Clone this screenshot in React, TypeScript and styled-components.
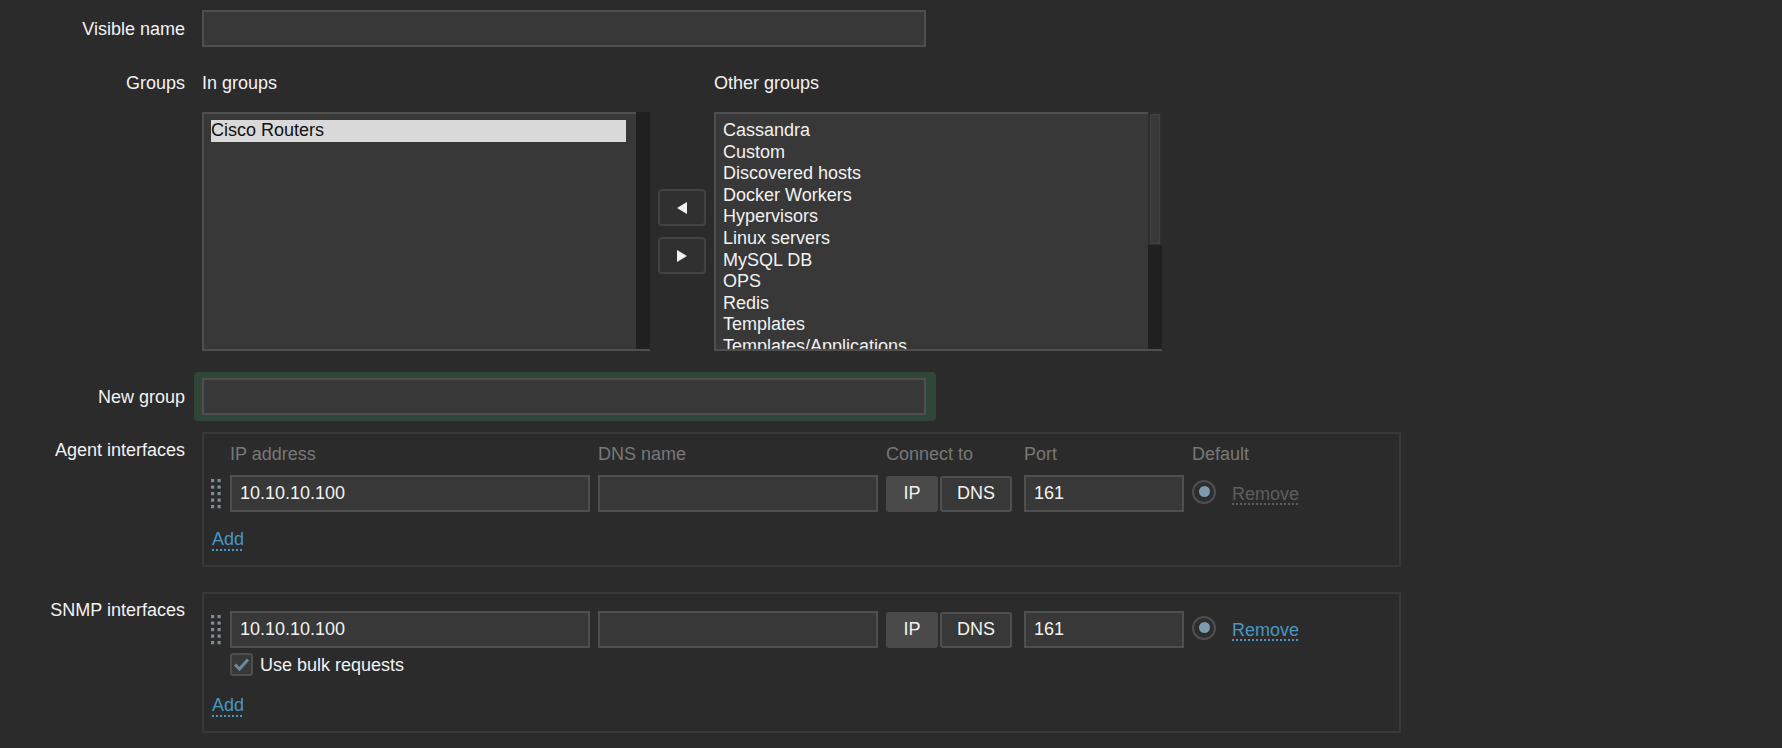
import React from 'react';
import styled, { createGlobalStyle } from 'styled-components';

const GlobalStyle = createGlobalStyle`
  body {
    margin: 0;
    background: #2b2b2b;
    color: #f2f2f2;
    font-family: 'Liberation Sans', Arial, sans-serif;
    font-size: 18px;
  }
`;

const inGroups = ['Cisco Routers'];
const otherGroups = [
  'Cassandra',
  'Custom',
  'Discovered hosts',
  'Docker Workers',
  'Hypervisors',
  'Linux servers',
  'MySQL DB',
  'OPS',
  'Redis',
  'Templates',
  'Templates/Applications',
];

const DragHandle = () => (
  <svg width="10" height="30" viewBox="0 0 10 30">
    {[0, 6.5, 13, 19.5, 26].map((y) =>
      [0, 6.5].map((x) => (
        <rect key={`${x}-${y}`} x={x} y={y} width="3.2" height="3.2" fill="#7b8d98" />
      )),
    )}
  </svg>
);

const Triangle = ({ dir }: { dir: 'left' | 'right' }) => (
  <svg width="10" height="12" viewBox="0 0 10 12">
    <polygon points={dir === 'left' ? '10,0 10,12 0,6' : '0,0 0,12 10,6'} fill="#f2f2f2" />
  </svg>
);

const CheckMark = () => (
  <svg width="17" height="15" viewBox="0 0 17 15">
    <path d="M2 7.5 L6.5 12 L15 2.5" fill="none" stroke="#6b8a9c" strokeWidth="3" />
  </svg>
);

interface InterfaceRowProps {
  ip: string;
  port: string;
  removable: boolean;
}

const InterfaceRow: React.FC<InterfaceRowProps> = ({ ip, port, removable }) => (
  <>
    <HandleCell>
      <DragHandle />
    </HandleCell>
    <TextInput value={ip} readOnly $width="100%" />
    <TextInput value="" readOnly $width="100%" />
    <Segmented>
      <SegButton $active>IP</SegButton>
      <SegButton>DNS</SegButton>
    </Segmented>
    <TextInput value={port} readOnly $width="100%" />
    <Radio>
      <RadioDot />
    </Radio>
    <LinkText $disabled={!removable}>Remove</LinkText>
  </>
);

export default function App() {
  return (
    <>
      <GlobalStyle />
      <Form>
        <FormRow $top={10} $align="center">
          <Label>Visible name</Label>
          <TextInput value="" readOnly $width="724px" />
        </FormRow>

        <FormRow $top={25}>
          <Label>Groups</Label>
          <GroupsGrid>
            <ColumnHeader>In groups</ColumnHeader>
            <span />
            <ColumnHeader>Other groups</ColumnHeader>

            <ListBox>
              <ListArea>
                {inGroups.map((g) => (
                  <ListOption key={g} $selected>
                    {g}
                  </ListOption>
                ))}
              </ListArea>
              <Scrollbar>
                <ScrollRest />
              </Scrollbar>
            </ListBox>

            <MoveButtons>
              <ArrowButton>
                <Triangle dir="left" />
              </ArrowButton>
              <ArrowButton>
                <Triangle dir="right" />
              </ArrowButton>
            </MoveButtons>

            <ListBox>
              <ListArea>
                {otherGroups.map((g) => (
                  <ListOption key={g}>{g}</ListOption>
                ))}
              </ListArea>
              <Scrollbar>
                <ScrollTrack>
                  <ScrollThumb />
                </ScrollTrack>
                <ScrollRest />
              </Scrollbar>
            </ListBox>
          </GroupsGrid>
        </FormRow>

        <FormRow $top={21} $align="center">
          <Label>New group</Label>
          <Highlight>
            <TextInput value="" readOnly $width="724px" />
          </Highlight>
        </FormRow>

        <FormRow $top={11}>
          <Label $padTop={7}>Agent interfaces</Label>
          <InterfaceBox $padTop={9} $padBottom={15}>
            <InterfaceGrid>
              <span />
              <HeaderCell>IP address</HeaderCell>
              <HeaderCell>DNS name</HeaderCell>
              <HeaderCell>Connect to</HeaderCell>
              <HeaderCell>Port</HeaderCell>
              <HeaderCell>Default</HeaderCell>
              <span />
              <InterfaceRow ip="10.10.10.100" port="161" removable={false} />
            </InterfaceGrid>
            <AddLine $top={16}>
              <LinkText>Add</LinkText>
            </AddLine>
          </InterfaceBox>
        </FormRow>

        <FormRow $top={25}>
          <Label $padTop={7}>SNMP interfaces</Label>
          <InterfaceBox $padTop={17} $padBottom={15}>
            <InterfaceGrid>
              <InterfaceRow ip="10.10.10.100" port="161" removable />
            </InterfaceGrid>
            <CheckRow>
              <CheckBox>
                <CheckMark />
              </CheckBox>
              <span>Use bulk requests</span>
            </CheckRow>
            <AddLine $top={18}>
              <LinkText>Add</LinkText>
            </AddLine>
          </InterfaceBox>
        </FormRow>
      </Form>
    </>
  );
}

const Form = styled.form`
  display: flex;
  flex-direction: column;
`;

const FormRow = styled.div<{ $top: number; $align?: string }>`
  display: grid;
  grid-template-columns: 185px 1fr;
  column-gap: 17px;
  align-items: ${({ $align }) => $align || 'start'};
  margin-top: ${({ $top }) => $top}px;
`;

const Label = styled.label<{ $padTop?: number }>`
  text-align: right;
  line-height: 22px;
  padding-top: ${({ $padTop }) => $padTop || 0}px;
  white-space: nowrap;
`;

const TextInput = styled.input<{ $width: string }>`
  box-sizing: border-box;
  width: ${({ $width }) => $width};
  height: 37px;
  margin: 0;
  padding: 0 8px;
  background: #383838;
  border: 2px solid #4f4f4f;
  border-radius: 0;
  color: #f2f2f2;
  font: inherit;
  outline: none;
`;

const GroupsGrid = styled.div`
  display: grid;
  grid-template-columns: 448px 48px 448px;
  column-gap: 8px;
  row-gap: 18px;
`;

const ColumnHeader = styled.div`
  line-height: 22px;
`;

const ListBox = styled.div`
  display: flex;
  height: 239px;
  box-sizing: border-box;
  border-bottom: 2px solid #4f4f4f;
`;

const ListArea = styled.div`
  flex: 1;
  background: #383838;
  border-top: 2px solid #4f4f4f;
  border-left: 2px solid #4f4f4f;
  padding: 6px 10px 0 7px;
  overflow: hidden;
`;

const ListOption = styled.div<{ $selected?: boolean }>`
  line-height: 21.6px;
  white-space: nowrap;
  background: ${({ $selected }) => ($selected ? '#d9d9d9' : 'transparent')};
  color: ${({ $selected }) => ($selected ? '#111' : '#f2f2f2')};
`;

const Scrollbar = styled.div`
  width: 14px;
  display: flex;
  flex-direction: column;
`;

const ScrollTrack = styled.div`
  height: 133px;
  background: #2e2e2e;
  padding: 2px 2px 1px;
  box-sizing: border-box;
  display: flex;
`;

const ScrollThumb = styled.div`
  flex: 1;
  background: #393939;
  border: 1px solid #414141;
`;

const ScrollRest = styled.div`
  flex: 1;
  background: #202020;
`;

const MoveButtons = styled.div`
  align-self: center;
  display: flex;
  flex-direction: column;
  gap: 11px;
`;

const ArrowButton = styled.button`
  box-sizing: border-box;
  width: 48px;
  height: 37px;
  display: flex;
  align-items: center;
  justify-content: center;
  padding: 0;
  background: #303030;
  border: 2px solid #424242;
  border-radius: 4px;
`;

const Highlight = styled.div`
  justify-self: start;
  margin-left: -8px;
  padding: 6px 10px 6px 8px;
  background: #304638;
  border-radius: 4px;
  display: flex;
`;

const InterfaceBox = styled.div<{ $padTop: number; $padBottom: number }>`
  box-sizing: border-box;
  width: 1199px;
  border: 2px solid #383838;
  padding: ${({ $padTop, $padBottom }) => `${$padTop}px 0 ${$padBottom}px 6px`};
`;

const InterfaceGrid = styled.div`
  display: grid;
  grid-template-columns: 12px 360px 280px 130px 160px 32px auto;
  column-gap: 8px;
  row-gap: 10px;
  align-items: center;
`;

const HeaderCell = styled.div`
  color: #787878;
  line-height: 22px;
  white-space: nowrap;
`;

const HandleCell = styled.div`
  display: flex;
  padding-left: 1px;
`;

const Segmented = styled.div`
  display: flex;
  gap: 2px;
`;

const SegButton = styled.div<{ $active?: boolean }>`
  box-sizing: border-box;
  height: 36px;
  padding: 0 ${({ $active }) => ($active ? 14 : 12)}px;
  min-width: ${({ $active }) => ($active ? 52 : 72)}px;
  display: flex;
  align-items: center;
  justify-content: center;
  background: ${({ $active }) => ($active ? '#4a4a4a' : '#383838')};
  border: 2px solid ${({ $active }) => ($active ? '#4a4a4a' : '#4f4f4f')};
  border-radius: 3px;
  color: #f2f2f2;
`;

const Radio = styled.div`
  box-sizing: border-box;
  width: 24px;
  height: 24px;
  border-radius: 50%;
  border: 2px solid #4f4f4f;
  background: #2e2e2e;
  display: flex;
  align-items: center;
  justify-content: center;
  margin-top: -4px;
`;

const RadioDot = styled.div`
  width: 11px;
  height: 11px;
  border-radius: 50%;
  background: #7c9bae;
`;

const LinkText = styled.a<{ $disabled?: boolean }>`
  color: ${({ $disabled }) => ($disabled ? '#5e5e5e' : '#4796c4')};
  text-decoration: underline dotted;
  text-decoration-thickness: 2px;
  text-underline-offset: 4px;
  line-height: 22px;
  cursor: pointer;
  white-space: nowrap;
`;

const AddLine = styled.div<{ $top: number }>`
  margin-top: ${({ $top }) => $top}px;
  padding-left: 2px;
  line-height: 22px;
`;

const CheckRow = styled.div`
  display: flex;
  align-items: center;
  gap: 7px;
  margin: 5px 0 0 20px;
  line-height: 22px;
`;

const CheckBox = styled.span`
  box-sizing: border-box;
  width: 23px;
  height: 23px;
  border: 2px solid #4f4f4f;
  border-radius: 3px;
  background: #383838;
  display: flex;
  align-items: center;
  justify-content: center;
`;
